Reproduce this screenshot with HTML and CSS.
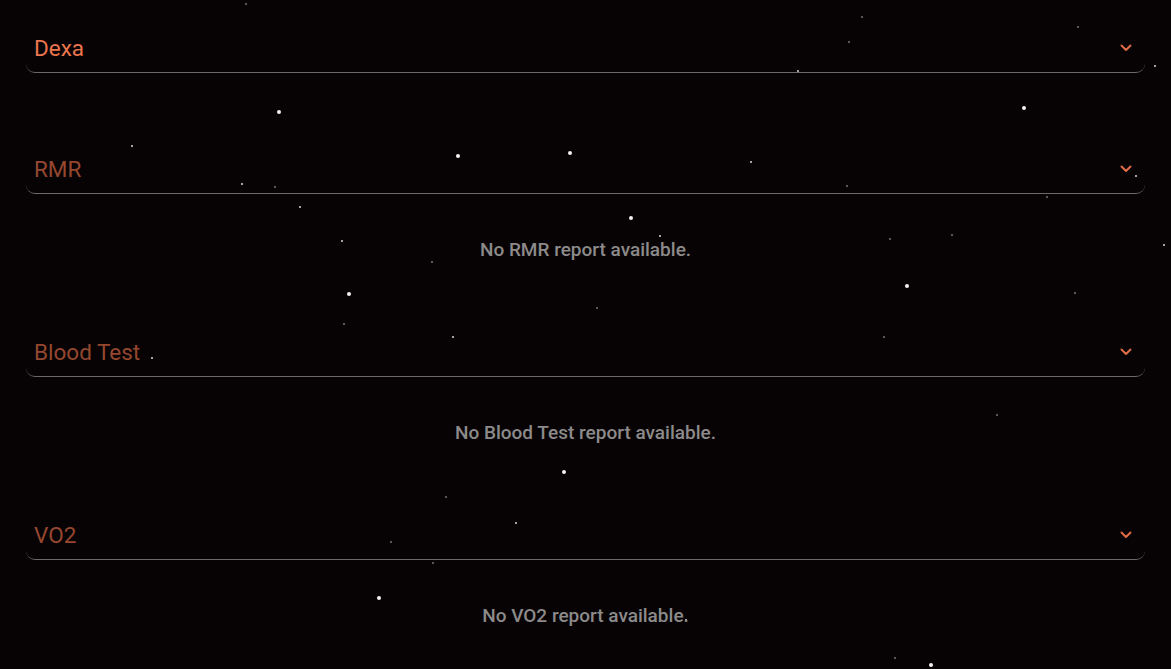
FILE: index.html
```html
<!DOCTYPE html>
<html lang="en">
<head>
    <meta charset="UTF-8">
    <meta name="viewport" content="width=device-width, initial-scale=1.0">
    <title>Reports</title>
    <link rel="stylesheet" href="styles.css">
</head>
<body>
    <!-- Star field -->
    <div class="stars" id="stars"></div>

    <main class="reports">
        <!-- Dexa -->
        <section class="report open">
            <div class="report-header">
                <span class="report-title">Dexa</span>
                <svg class="chevron" viewBox="0 0 12 8"><path d="M1.5 1.5 L6 6 L10.5 1.5"/></svg>
            </div>
            <div class="report-body empty"></div>
        </section>

        <!-- RMR -->
        <section class="report">
            <div class="report-header">
                <span class="report-title">RMR</span>
                <svg class="chevron" viewBox="0 0 12 8"><path d="M1.5 1.5 L6 6 L10.5 1.5"/></svg>
            </div>
            <p class="report-body">No RMR report available.</p>
        </section>

        <!-- Blood Test -->
        <section class="report">
            <div class="report-header">
                <span class="report-title">Blood Test</span>
                <svg class="chevron" viewBox="0 0 12 8"><path d="M1.5 1.5 L6 6 L10.5 1.5"/></svg>
            </div>
            <p class="report-body">No Blood Test report available.</p>
        </section>

        <!-- VO2 -->
        <section class="report">
            <div class="report-header">
                <span class="report-title">VO2</span>
                <svg class="chevron" viewBox="0 0 12 8"><path d="M1.5 1.5 L6 6 L10.5 1.5"/></svg>
            </div>
            <p class="report-body">No VO2 report available.</p>
        </section>
    </main>

    <script>
        // Star field
        const stars = [
            [246,4,1],[862,17,1],[1078,27,1],[849,42,1],[1155,66,2],[798,71,2],
            [1024,108,3],[279,112,3],[132,146,2],[458,156,3],[570,153,3],[751,162,2],
            [242,184,2],[275,187,1],[847,186,1],[1136,176,2],[300,207,2],[1047,197,1],
            [631,218,3],[660,236,2],[342,241,2],[952,235,1],[890,239,1],[1164,245,2],
            [432,262,1],[349,294,3],[907,286,3],[1075,293,1],[597,308,1],[344,324,1],
            [453,337,2],[884,337,1],[152,358,2],[997,415,1],[564,472,3],[446,497,1],
            [516,523,2],[391,542,1],[433,563,1],[379,598,3],[686,620,2],[895,658,1],
            [931,665,3]
        ];
        const field = document.getElementById('stars');
        stars.forEach(([x, y, s]) => {
            const dot = document.createElement('span');
            dot.className = 'star size-' + s;
            dot.style.left = x + 'px';
            dot.style.top = y + 'px';
            field.appendChild(dot);
        });
    </script>
</body>
</html>
```

FILE: styles.css
```css
* {
    margin: 0;
    padding: 0;
    box-sizing: border-box;
}

body {
    background-color: #070304;
    color: #fff;
    font-family: 'Roboto', 'Liberation Sans', sans-serif;
    height: 669px;
    overflow: hidden;
    position: relative;
}

/* Star field */
.stars {
    position: absolute;
    inset: 0;
    pointer-events: none;
}

.star {
    position: absolute;
    border-radius: 50%;
    background: #fff;
    transform: translate(-50%, -50%);
}

.star.size-1 {
    width: 2px;
    height: 2px;
    opacity: 0.45;
}

.star.size-2 {
    width: 2px;
    height: 2px;
    opacity: 0.85;
}

.star.size-3 {
    width: 4px;
    height: 4px;
    opacity: 0.95;
}

/* Reports */
.reports {
    position: relative;
    padding: 24px 26px 0;
    display: flex;
    flex-direction: column;
    gap: 66px;
}

.report-header {
    height: 49px;
    display: flex;
    align-items: center;
    justify-content: space-between;
    padding: 0 13px 0 8px;
    border-bottom: 1px solid #6b6767;
    border-radius: 0 0 9px 9px;
}

.report-title {
    font-size: 22.5px;
    color: #95472f;
}

.chevron {
    width: 12px;
    height: 8px;
    fill: none;
    stroke: #e06c47;
    stroke-width: 2;
    stroke-linecap: round;
    stroke-linejoin: round;
}

.report.open .report-title {
    color: #ec764d;
}

.report-body {
    padding-top: 44px;
    line-height: 24px;
    text-align: center;
    font-size: 19px;
    font-weight: 500;
    color: #8c8a8a;
}

.report-body.empty {
    height: 6px;
    padding: 0;
}
```
